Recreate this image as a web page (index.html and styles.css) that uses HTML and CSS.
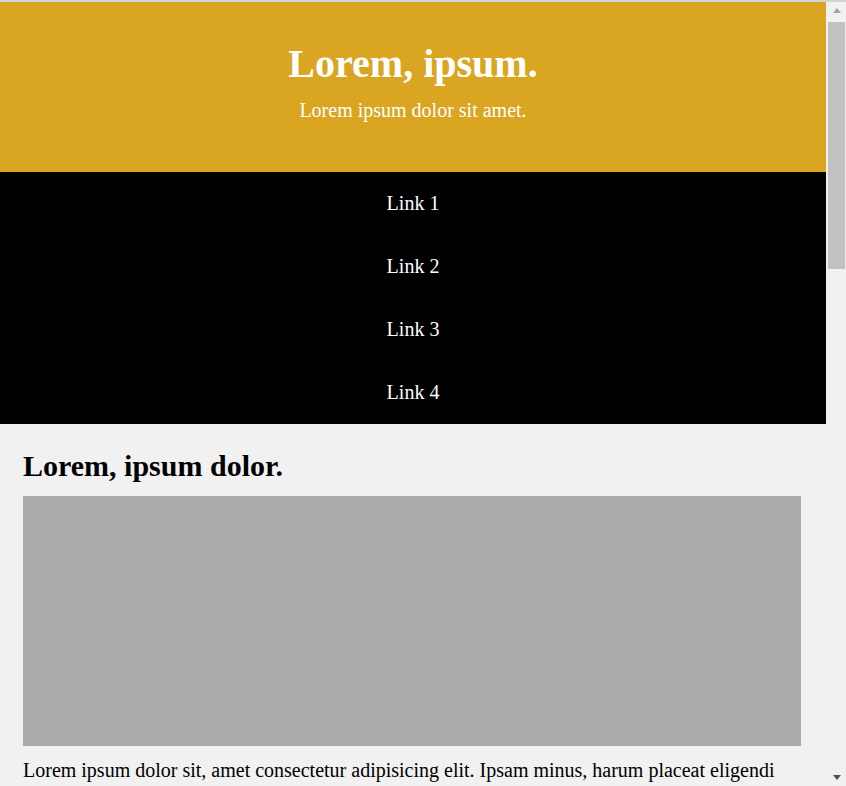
FILE: index.html
```html
<!DOCTYPE html>
<html lang="en">
<head>
<meta charset="utf-8">
<title>Lorem, ipsum.</title>
<link rel="stylesheet" href="styles.css">
</head>
<body>
<div class="page">
  <header class="header">
    <h1 class="header-title">Lorem, ipsum.</h1>
    <p class="header-sub">Lorem ipsum dolor sit amet.</p>
  </header>
  <nav class="nav">
    <a class="nav-link" href="#">Link 1</a>
    <a class="nav-link" href="#">Link 2</a>
    <a class="nav-link" href="#">Link 3</a>
    <a class="nav-link" href="#">Link 4</a>
  </nav>
  <main class="main">
    <section class="post">
      <h2 class="post-title">Lorem, ipsum dolor.</h2>
      <div class="fakeimg"></div>
      <p class="post-text">Lorem ipsum dolor sit, amet consectetur adipisicing elit. Ipsam minus, harum placeat eligendi dolorum quos eos quas similique aut natus dolore, dolorem expedita! Molestiae, totam, consequuntur, explicabo laboriosam quis sequi id ratione voluptate.</p>
    </section>
  </main>
</div>
<div class="scrollbar" aria-hidden="true">
  <div class="sb-btn"><span class="sb-up"></span></div>
  <div class="sb-track"><div class="sb-thumb"></div></div>
  <div class="sb-btn"><span class="sb-down"></span></div>
</div>
</body>
</html>
```
FILE: styles.css
```css
html {
  background: #f1f1f1;
  height: 100%;
}
body {
  margin: 0;
  height: 100vh;
  box-sizing: border-box;
  overflow: hidden;
  display: flex;
  border-top: 2px solid #d4d4d4;
  font-family: "Liberation Serif", "Times New Roman", serif;
  font-size: 20px;
  background: #f1f1f1;
  color: #000;
}
.page {
  flex: 1;
  min-width: 0;
  overflow: hidden;
}
.header {
  background: #daa520;
  color: #fff;
  text-align: center;
  height: 170px;
  box-sizing: border-box;
  padding-top: 39px;
}
.header-title {
  margin: 0;
  font-size: 40px;
  line-height: 46px;
  font-weight: bold;
}
.header-sub {
  margin: 12px 0 0;
  font-size: 20px;
  line-height: 23px;
}
.nav {
  background: #000;
  display: flex;
  flex-direction: column;
}
.nav-link {
  display: block;
  color: #fff;
  text-decoration: none;
  text-align: center;
  padding: 20px 0;
  line-height: 23px;
}
.main {
  padding: 25px 25px 20px 23px;
}
.post-title {
  margin: 0 0 13px;
  font-size: 30px;
  line-height: 34px;
}
.fakeimg {
  background: #aaa;
  height: 250px;
}
.post-text {
  margin: 13px 0 40px;
  line-height: 23px;
}
.scrollbar {
  width: 20px;
  flex: none;
  background: #f1f1f1;
  display: flex;
  flex-direction: column;
}
.sb-btn {
  height: 17px;
  display: flex;
  align-items: center;
  justify-content: center;
  padding-left: 1px;
}
.sb-up {
  width: 0;
  height: 0;
  border-left: 4.5px solid transparent;
  border-right: 4.5px solid transparent;
  border-bottom: 5px solid #a3a3a3;
}
.sb-down {
  width: 0;
  height: 0;
  border-left: 4.5px solid transparent;
  border-right: 4.5px solid transparent;
  border-top: 5px solid #505050;
}
.sb-track {
  flex: 1;
  padding: 3px 1px 0 2px;
}
.sb-thumb {
  height: 247px;
  background: #c1c1c1;
}
```
